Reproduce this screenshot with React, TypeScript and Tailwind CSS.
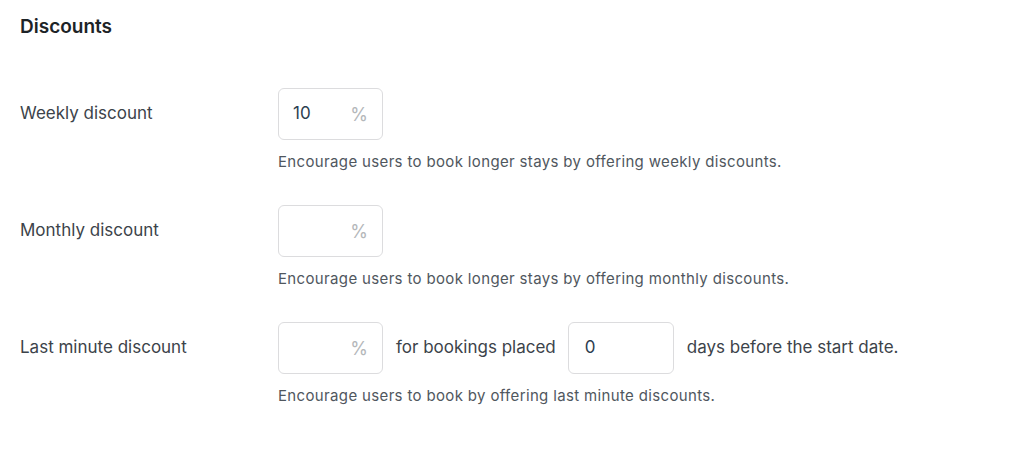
import React from "react";

const font = { fontFamily: "Inter, 'Noto Sans', sans-serif" };

function PctInput({ value }: { value?: string }) {
  return (
    <div className="flex h-[52px] w-[105px] items-center justify-between rounded-[6px] border border-[#dcdcde] bg-white pl-[14px] pr-[14px]">
      <span className="text-[17px] text-[#2c3e50]">{value ?? ""}</span>
      <span className="text-[18px] text-[#b4b7ba]">%</span>
    </div>
  );
}

function Row({ label, help, children }: { label: string; help: string; children: React.ReactNode }) {
  return (
    <div className="flex">
      <div className="flex h-[52px] w-[258px] shrink-0 items-center text-[17px] text-[#3c434a]">{label}</div>
      <div className="flex flex-col">
        <div className="flex items-center">{children}</div>
        <p className="mt-[11px] text-[15px] leading-[22px] tracking-[0.35px] text-[#50575e]">{help}</p>
      </div>
    </div>
  );
}

export default function App() {
  return (
    <div className="min-h-[454px] w-[1024px] bg-white pl-[20px] pt-[15px]" style={font}>
      <h2 className="text-[19px] font-semibold leading-[24px] text-[#1d2327]">Discounts</h2>
      <div className="mt-[49px] flex flex-col gap-[32px]">
        <Row label="Weekly discount" help="Encourage users to book longer stays by offering weekly discounts.">
          <PctInput value="10" />
        </Row>
        <Row label="Monthly discount" help="Encourage users to book longer stays by offering monthly discounts.">
          <PctInput />
        </Row>
        <Row label="Last minute discount" help="Encourage users to book by offering last minute discounts.">
          <PctInput />
          <span className="ml-[13px] mr-[12px] text-[17px] text-[#3c434a]">for bookings placed</span>
          <div className="flex h-[52px] w-[106px] items-center rounded-[6px] border border-[#dcdcde] bg-white pl-[16px] text-[17px] text-[#2c3e50]">0</div>
          <span className="ml-[13px] text-[17px] text-[#3c434a]">days before the start date.</span>
        </Row>
      </div>
    </div>
  );
}
